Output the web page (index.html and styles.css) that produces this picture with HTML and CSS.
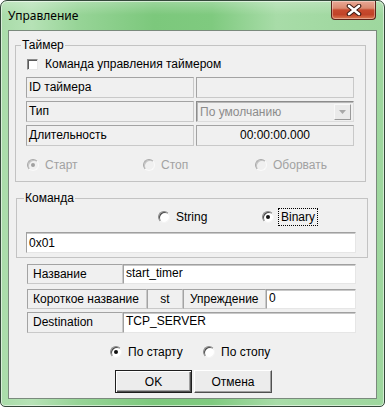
FILE: index.html
```html
<!DOCTYPE html>
<html lang="ru">
<head>
<meta charset="utf-8">
<title>Управление</title>
<link rel="stylesheet" href="styles.css">
</head>
<body>
<div class="window">
  <div class="titlebar">
    <span class="title">Управление</span>
    <button class="close" aria-label="Закрыть">
      <svg width="16" height="12" viewBox="0 0 16 12">
        <path d="M3 2 L13 10 M13 2 L3 10" stroke="#3b1a12" stroke-width="4.6" stroke-linecap="round"/>
        <path d="M3 2 L13 10 M13 2 L3 10" stroke="#fff" stroke-width="2.6" stroke-linecap="round"/>
      </svg>
    </button>
  </div>
  <div class="client">
    <fieldset class="group timer">
      <legend>Таймер</legend>
      <label class="check"><span class="cbox"></span>Команда управления таймером</label>
      <div class="rows">
        <div class="row"><div class="lbl w168">ID таймера</div><div class="dis w159"></div></div>
        <div class="row"><div class="lbl w168">Тип</div>
          <div class="combo w159"><span class="ctext">По умолчанию</span><span class="cbtn"><svg width="7" height="4" viewBox="0 0 7 4"><path d="M0 0 H7 L3.5 4 Z" fill="#a8a8a8"/></svg></span></div>
        </div>
        <div class="row"><div class="lbl w168">Длительность</div><div class="dis w159 center">00:00:00.000</div></div>
      </div>
      <div class="radios timer-radios">
        <label class="radio disabled checked"><span class="rb"></span>Старт</label>
        <label class="radio disabled"><span class="rb"></span>Стоп</label>
        <label class="radio disabled"><span class="rb"></span>Оборвать</label>
      </div>
    </fieldset>

    <fieldset class="group command">
      <legend>Команда</legend>
      <div class="radios cmd-radios">
        <label class="radio"><span class="rb"></span>String</label>
        <label class="radio checked"><span class="rb"></span><span class="focus">Binary</span></label>
      </div>
      <div class="edit wide">0x01</div>
    </fieldset>

    <div class="fields">
      <div class="row r20"><div class="lbl w96">Название</div><div class="edit w233">start_timer</div></div>
      <div class="row r20 gap5"><div class="lbl w120">Короткое название</div><div class="lbl w36 center">st</div><div class="lbl w83 pl7">Упреждение</div><div class="edit w90">0</div></div>
      <div class="row r21 gap3"><div class="lbl w96">Destination</div><div class="edit w233">TCP_SERVER</div></div>
    </div>

    <div class="radios bottom-radios">
      <label class="radio checked"><span class="rb"></span>По старту</label>
      <label class="radio"><span class="rb"></span>По стопу</label>
    </div>

    <div class="buttons">
      <button class="btn default">OK</button>
      <button class="btn">Отмена</button>
    </div>
  </div>
</div>
</body>
</html>
```

FILE: styles.css
```css
* { box-sizing: border-box; }
html, body { margin: 0; padding: 0; background: #ffffff; }
body {
  font-family: "Liberation Sans", Arial, sans-serif;
  font-size: 12px;
  color: #000;
}

.window {
  width: 385px;
  height: 407px;
  border: 1px solid #34483a;
  border-radius: 7px 7px 5px 5px;
  background:
    linear-gradient(180deg, rgba(255,255,255,0.25) 0px, rgba(255,255,255,0) 14px),
    linear-gradient(90deg, #a9dca9 0%, #b6e2b6 8%, #97d497 20%, #7cc87c 40%, #7fca7f 55%, #a8dca8 72%, #a2d9a2 86%, #9ed79e 100%);
  box-shadow: inset 0 0 0 1px rgba(255,255,255,0.55);
  display: flex;
  flex-direction: column;
  overflow: hidden;
}

.titlebar {
  height: 29px;
  flex: none;
  display: flex;
  align-items: flex-start;
  padding-left: 7px;
}
.title {
  font-family: "Noto Sans", "Liberation Sans", sans-serif;
  font-size: 12px;
  line-height: 29px;
  color: #000;
}
.close {
  margin-left: auto;
  margin-right: 8px;
  width: 45px;
  height: 19px;
  padding: 0;
  border: 1px solid #5b2219;
  border-top: none;
  border-radius: 0 0 4px 4px;
  background: linear-gradient(180deg, #e9a996 0%, #db8a70 40%, #c74a2e 50%, #c14328 75%, #dc7a52 100%);
  box-shadow: inset 0 0 0 1px rgba(255,255,255,0.35);
  display: flex;
  align-items: center;
  justify-content: center;
}

.client {
  margin: 0 7px 7px 7px;
  height: 369px;
  background: #f0f0f0;
  border: 1px solid #7a8a7c;
  display: flex;
  flex-direction: column;
}

.group {
  margin: 0;
  border: 1px solid #c3c3c3;
  padding: 0;
  min-width: 0;
}
.group legend {
  padding: 0 1px;
  line-height: 14px;
  background: #f0f0f0;
}

.timer {
  margin: 7px 0 0 6px;
  width: 351px;
  height: 144px;
  padding: 5px 0 0 10px;
}
.timer legend { margin-left: -5px; }

.command {
  margin: 9px 0 0 7px;
  width: 352px;
  height: 67px;
  padding: 5px 0 0 9px;
}
.command legend { margin-left: -2px; }

.check {
  display: flex;
  align-items: center;
  height: 14px;
  margin-left: 1px;
  gap: 7px;
}
.cbox {
  width: 11px;
  height: 11px;
  background: #fff;
  border: 1px solid;
  border-color: #8a8a8a #e8e8e8 #e8e8e8 #8a8a8a;
  box-shadow: inset 1px 1px 0 #5a5a5a;
}

.rows {
  margin-top: 6px;
  display: flex;
  flex-direction: column;
  gap: 3px;
}
.row { display: flex; height: 21px; }
.r20 { height: 20px; }
.r21 { height: 21px; }
.gap5 { margin-top: 5px; }
.gap3 { margin-top: 3px; }

.lbl, .dis, .combo, .edit {
  border: 1px solid;
  line-height: 17px;
  white-space: nowrap;
  overflow: hidden;
}
.lbl {
  background: #f0f0f0;
  border-color: #a3a3a3 #c9c9c9 #c9c9c9 #a3a3a3;
  padding-left: 2px;
  line-height: 19px;
}
.fields .lbl { padding-left: 5px; line-height: 18px; }
.fields .lbl.center { padding-left: 0; }
.fields .lbl.pl7 { padding-left: 6px; }
.dis {
  background: #f0f0f0;
  border-color: #a3a3a3 #c9c9c9 #c9c9c9 #a3a3a3;
  margin-left: 2px;
  line-height: 19px;
}
.center { text-align: center; }
.combo {
  margin-left: 2px;
  background: #f0f0f0;
  border-color: #8c8c8c #dcdcdc #dcdcdc #8c8c8c;
  box-shadow: inset 1px 1px 0 #b8b8b8;
  display: flex;
  align-items: center;
  padding: 1px 2px 1px 3px;
}
.ctext { flex: 1; color: #8c8c8c; line-height: 16px; }
.cbtn {
  width: 17px;
  height: 16px;
  background: #eaeaea;
  border: 1px solid;
  border-color: #f8f8f8 #9a9a9a #9a9a9a #f8f8f8;
  display: flex;
  align-items: center;
  justify-content: center;
}

.edit {
  background: #fff;
  border-color: #a0a0a0 #e6e6e6 #e6e6e6 #a0a0a0;
  box-shadow: inset 0 1px 0 #c8c8c8;
  padding: 1px 2px 0 2px;
  line-height: 14px;
}
.wide { width: 330px; height: 21px; margin-top: 8px; padding-top: 3px; }

.w168 { width: 168px; }
.w159 { width: 158px; }
.w96 { width: 96px; }
.w233 { width: 233px; }
.w120 { width: 120px; }
.w36 { width: 36px; }
.w83 { width: 83px; }
.w90 { width: 90px; }

.radios { display: grid; height: 14px; align-items: center; }
.timer-radios {
  margin-top: 12px;
  margin-left: 1px;
  grid-template-columns: 116px 112px auto;
}
.cmd-radios {
  margin-left: 132px;
  grid-template-columns: 104px auto;
}
.bottom-radios {
  margin-top: 12px;
  margin-left: 101px;
  grid-template-columns: 93px auto;
}
.radio {
  display: flex;
  align-items: center;
  gap: 6px;
  height: 14px;
}
.rb {
  position: relative;
  width: 12px;
  height: 12px;
  border-radius: 50%;
  background: #fff;
  border: 1px solid;
  border-color: #888 #f4f4f4 #f4f4f4 #888;
  box-shadow: inset 1px 1px 0 #4a4a4a;
  flex: none;
}
.radio.checked .rb::after {
  content: "";
  position: absolute;
  left: 3px;
  top: 3px;
  width: 4px;
  height: 4px;
  border-radius: 50%;
  background: #111;
}
.radio.disabled { color: #a2a2a2; }
.radio.disabled .rb {
  background: #f0f0f0;
  border-color: #a8a8a8 #fafafa #fafafa #a8a8a8;
  box-shadow: inset 1px 1px 0 #c4c4c4;
}
.radio.disabled.checked .rb::after { background: #a0a0a0; }
.focus {
  outline: 1px dotted #000;
  outline-offset: 1px;
  padding: 0 1px;
}

.fields {
  margin-top: 6px;
  margin-left: 18px;
  display: flex;
  flex-direction: column;
}

.buttons {
  margin-top: 11px;
  margin-left: 106px;
  display: flex;
  gap: 2px;
}
.btn {
  font-family: "Liberation Sans", Arial, sans-serif;
  font-size: 12px;
  height: 23px;
  width: 78px;
  padding: 0;
  background: #ececec;
  border: 1px solid;
  border-color: #fff #505050 #505050 #fff;
  box-shadow: inset -1px -1px 0 #a0a0a0;
  color: #000;
}
.btn.default {
  width: 77px;
  border: 1px solid #1e1e1e;
  box-shadow: inset 1px 1px 0 #fff, inset -1px -1px 0 #505050, inset -2px -2px 0 #a0a0a0;
}
```
